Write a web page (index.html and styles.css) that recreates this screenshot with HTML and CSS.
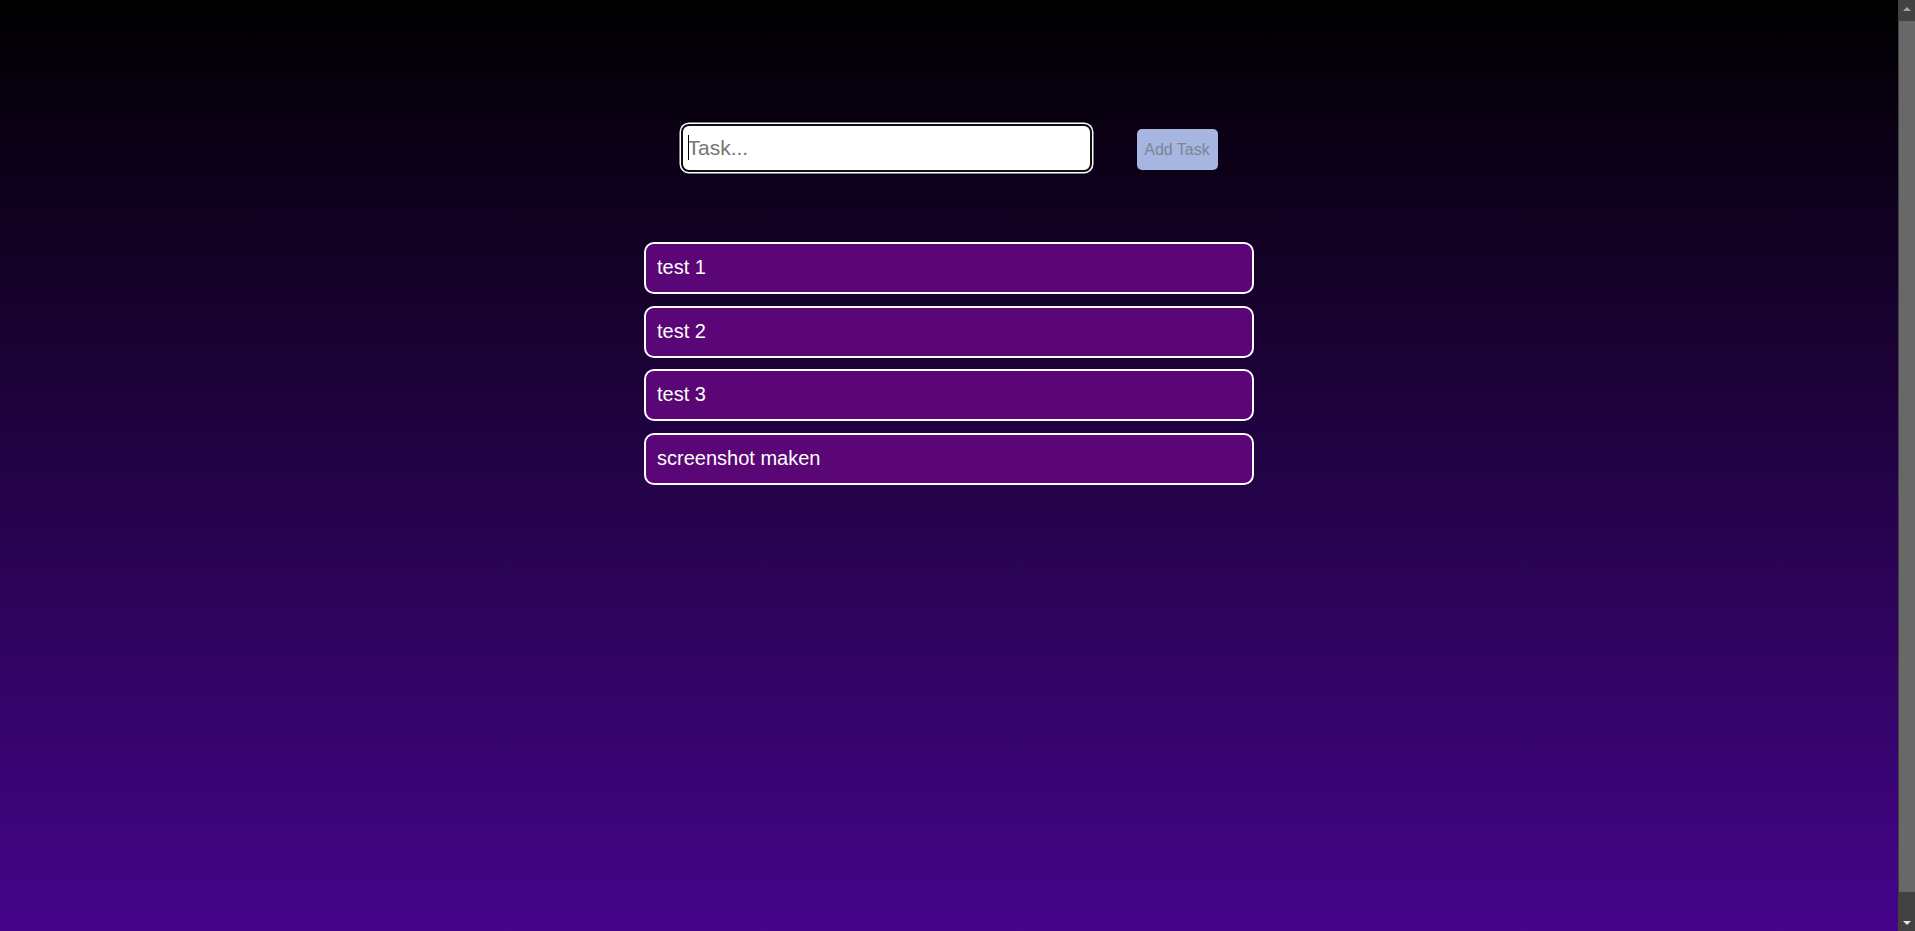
FILE: index.html
```html
<!DOCTYPE html>
<html lang="en">
<head>
<meta charset="utf-8">
<title>Todo</title>
<link rel="stylesheet" href="styles.css">
</head>
<body>
<div class="window">
  <div class="page">
    <div class="form">
      <div class="field">
        <input class="task-input" type="text" placeholder="Task...">
        <span class="caret"></span>
      </div>
      <button class="add-btn" type="button" disabled>Add Task</button>
    </div>
    <ul class="list">
      <li class="item">test 1</li>
      <li class="item">test 2</li>
      <li class="item">test 3</li>
      <li class="item">screenshot maken</li>
    </ul>
  </div>
  <div class="scrollbar">
    <div class="arrow arrow-up"></div>
    <div class="track"><div class="thumb"></div></div>
    <div class="arrow arrow-down"></div>
  </div>
</div>
</body>
</html>
```

FILE: styles.css
```css
html, body {
  margin: 0;
  padding: 0;
  height: 100%;
  overflow: hidden;
}
body {
  font-family: "Liberation Sans", Arial, sans-serif;
  background: #000;
}
.window {
  display: flex;
  height: 931px;
}
.page {
  flex: 1;
  min-width: 0;
  box-sizing: border-box;
  background: linear-gradient(to bottom, #000000 0px, #47058f 958px);
  display: flex;
  flex-direction: column;
  align-items: center;
  padding-top: 124px;
}
.form {
  display: flex;
  align-items: flex-start;
  gap: 45px;
}
.field {
  position: relative;
}
.task-input {
  display: block;
  width: 411px;
  height: 48px;
  box-sizing: border-box;
  border: 2px solid #101010;
  border-radius: 8px;
  box-shadow: 0 0 0 1.5px #ffffff;
  background: #ffffff;
  padding: 0 5px;
  margin: 0;
  font-family: "Liberation Sans", Arial, sans-serif;
  font-size: 21px;
  color: #000;
  outline: none;
}
.task-input::placeholder {
  color: #757575;
}
.caret {
  position: absolute;
  left: 7px;
  top: 11px;
  width: 1px;
  height: 25px;
  background: #000;
}
.add-btn {
  margin-top: 5px;
  width: 81px;
  height: 41px;
  box-sizing: border-box;
  border: none;
  border-radius: 5px;
  background: #a7b5e1;
  color: #7e8395;
  font-family: "Liberation Sans", Arial, sans-serif;
  font-size: 16px;
  padding: 0;
}
.list {
  list-style: none;
  margin: 70px 0 0 0;
  padding: 0;
  width: 610px;
  display: flex;
  flex-direction: column;
  gap: 11.5px;
}
.item {
  box-sizing: border-box;
  height: 52px;
  border: 2px solid #ffffff;
  border-radius: 10px;
  background: #5a0676;
  color: #ffffff;
  font-size: 20px;
  line-height: 23px;
  padding: 12px 11px;
}
.scrollbar {
  width: 17px;
  flex: 0 0 17px;
  display: flex;
  flex-direction: column;
  background: #424242;
}
.arrow {
  height: 17px;
  flex: 0 0 17px;
  display: flex;
  align-items: center;
  justify-content: center;
}
.arrow-up::before {
  content: "";
  border-left: 4px solid transparent;
  border-right: 4px solid transparent;
  border-bottom: 4px solid #a3a3a3;
}
.arrow-down::before {
  content: "";
  border-left: 4px solid transparent;
  border-right: 4px solid transparent;
  border-top: 4px solid #e8e8e8;
}
.track {
  flex: 1;
  display: flex;
  flex-direction: column;
  padding: 4px 0 0 1px;
}
.thumb {
  height: 871px;
  background: #686868;
}
```
